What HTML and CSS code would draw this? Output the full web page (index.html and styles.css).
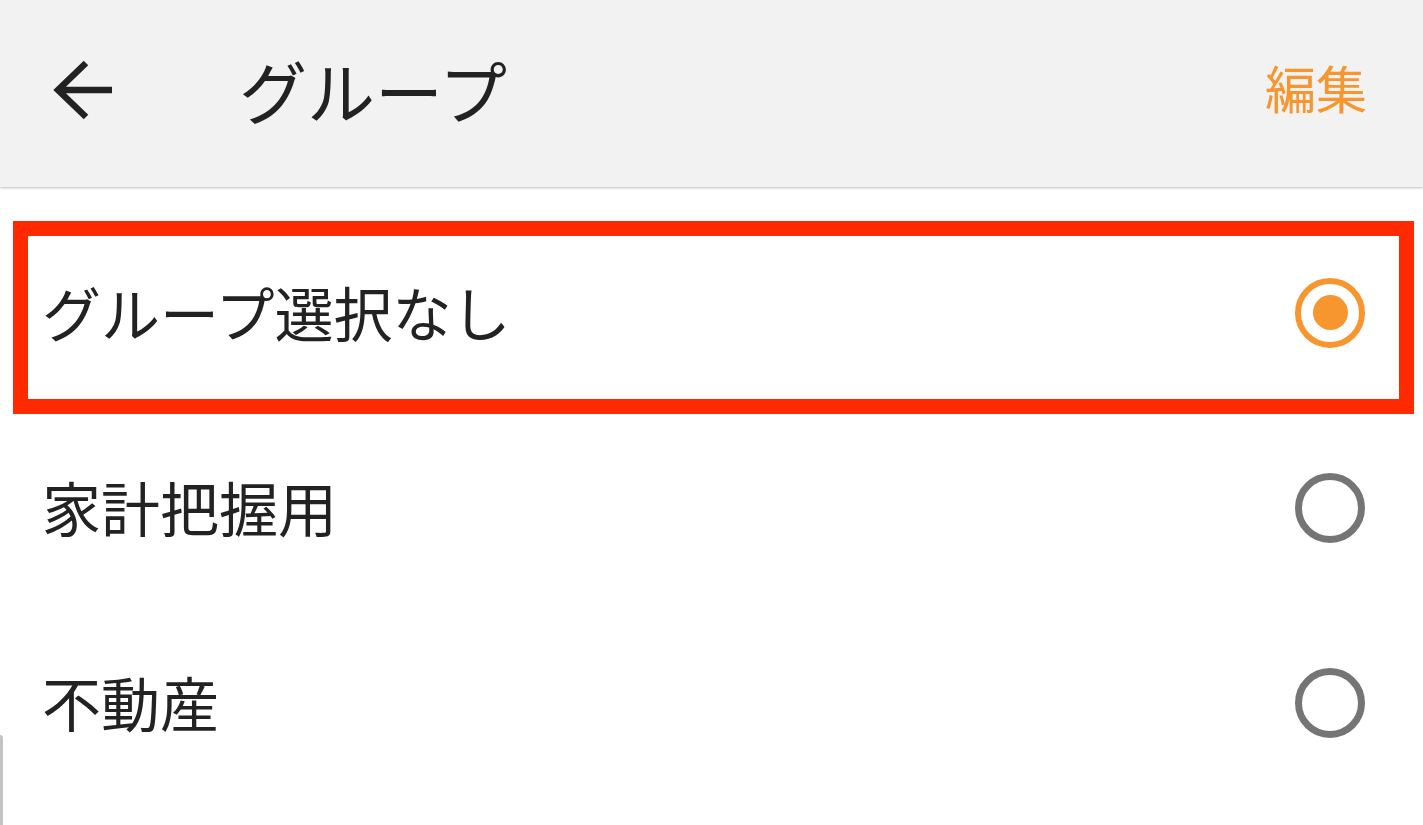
FILE: index.html
```html
<!DOCTYPE html>
<html lang="ja">
<head>
<meta charset="utf-8">
<title>グループ</title>
<link rel="stylesheet" href="styles.css">
</head>
<body>
<header class="appbar">
  <button class="back" aria-label="戻る">
    <svg width="70" height="70" viewBox="0 0 70 70">
      <path d="M37 8 L9 35 L37 62 M9 35 H63" fill="none" stroke="#222" stroke-width="6.5" stroke-linejoin="miter"/>
    </svg>
  </button>
  <h1 class="title">グループ</h1>
  <span class="edit">編集</span>
</header>
<main class="list">
  <div class="row highlighted">
    <span class="label">グループ選択なし</span>
    <span class="radio checked"></span>
  </div>
  <div class="row">
    <span class="label">家計把握用</span>
    <span class="radio"></span>
  </div>
  <div class="row">
    <span class="label">不動産</span>
    <span class="radio"></span>
  </div>
</main>
<div class="edge"></div>
</body>
</html>
```

FILE: styles.css
```css
html, body {
  margin: 0;
  padding: 0;
  background: #ffffff;
  height: 825px;
  overflow: hidden;
}
body {
  font-family: "Noto Sans CJK JP", "Noto Sans", sans-serif;
  color: #222222;
  position: relative;
}
.appbar {
  height: 187px;
  background: #f2f2f2;
  display: flex;
  align-items: center;
  box-shadow: 0 1px 2px rgba(0,0,0,0.18), 0 2px 3px rgba(0,0,0,0.06);
  position: relative;
  z-index: 1;
}
.back {
  border: 0;
  background: none;
  padding: 0;
  margin-left: 49px;
  width: 70px;
  height: 70px;
  display: flex;
  margin-top: -7px;
}
.title {
  margin: -8px 0 0 120px;
  font-size: 68px;
  font-weight: 400;
  line-height: 1;
  flex: 1;
}
.edit {
  color: #f7962f;
  font-size: 51px;
  line-height: 1;
  margin-right: 56px;
  margin-top: -12px;
}
.list {
  padding-top: 28px;
}
.row {
  height: 195px;
  display: flex;
  align-items: center;
  justify-content: space-between;
  padding: 0 58px 0 42px;
  position: relative;
}
.row.highlighted::after {
  content: "";
  position: absolute;
  top: 6px;
  bottom: -4px;
  left: 13px;
  right: 9px;
  border: 15px solid #ff2a00;
  box-sizing: border-box;
  pointer-events: none;
}
.label {
  font-size: 59px;
  line-height: 1;
  margin-top: -2px;
}
.radio {
  width: 70px;
  height: 70px;
  box-sizing: border-box;
  border-radius: 50%;
  border: 7px solid #757575;
  display: flex;
  align-items: center;
  justify-content: center;
}
.radio.checked {
  border: 6.5px solid #f7962f;
}
.radio.checked::before {
  content: "";
  width: 35px;
  height: 35px;
  border-radius: 50%;
  background: #f7962f;
}
.edge {
  position: absolute;
  left: 0;
  top: 735px;
  width: 3px;
  height: 100px;
  background: #c4c4c4;
  border-top-right-radius: 3px;
}
```
